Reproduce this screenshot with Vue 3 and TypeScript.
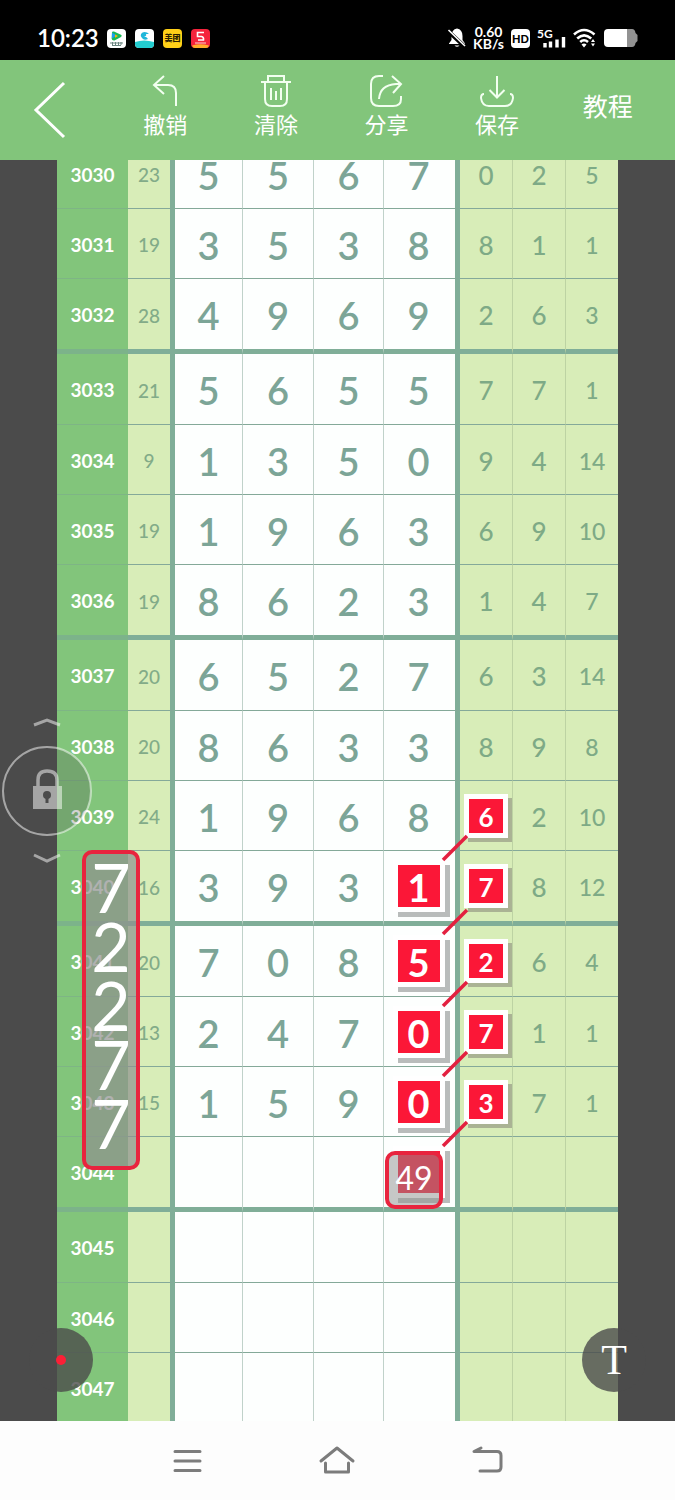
<script setup lang="ts">
interface Row {
  id: string
  sum: string
  main: string[]
  side: string[]
  thick?: boolean
  markMain?: boolean
  markSide?: boolean
}

const make = (id: number, sum: string, main: string, side: string, extra: Partial<Row> = {}): Row => ({
  id: String(id),
  sum,
  main: main ? main.split(' ') : ['', '', '', ''],
  side: side ? side.split(' ') : ['', '', ''],
  ...extra,
})

const rows: Row[] = [
  make(3030, '23', '5 5 6 7', '0 2 5'),
  make(3031, '19', '3 5 3 8', '8 1 1'),
  make(3032, '28', '4 9 6 9', '2 6 3', { thick: true }),
  make(3033, '21', '5 6 5 5', '7 7 1'),
  make(3034, '9', '1 3 5 0', '9 4 14'),
  make(3035, '19', '1 9 6 3', '6 9 10'),
  make(3036, '19', '8 6 2 3', '1 4 7', { thick: true }),
  make(3037, '20', '6 5 2 7', '6 3 14'),
  make(3038, '20', '8 6 3 3', '8 9 8'),
  make(3039, '24', '1 9 6 8', '6 2 10', { markSide: true }),
  make(3040, '16', '3 9 3 1', '7 8 12', { thick: true, markMain: true, markSide: true }),
  make(3041, '20', '7 0 8 5', '2 6 4', { markMain: true, markSide: true }),
  make(3042, '13', '2 4 7 0', '7 1 1', { markMain: true, markSide: true }),
  make(3043, '15', '1 5 9 0', '3 7 1', { markMain: true, markSide: true }),
  make(3044, '', '', '', { thick: true, markMain: true }),
  make(3045, '', '', ''),
  make(3046, '', '', ''),
  make(3047, '', '', ''),
]

const column = ['7', '2', '2', '7', '7']
</script>

<template>
  <div class="page">
    <div class="status">
      <span class="time">10:23</span>
      <div class="apps">
        <svg class="app" viewBox="0 0 19 19">
          <rect width="19" height="19" rx="4" fill="#fff" />
          <path d="M5 3.5Q5 2 7 2.6L14 5.7Q15.6 6.7 14 8L7.5 11.5Q5 12 4.6 9.5Z" fill="#19b955" />
          <path d="M5 3.6L9.5 6.4L5 9.5Z" fill="#1b9ff0" />
          <path d="M8 5.4L11 7L8 8.8Z" fill="#ffb400" />
          <path d="M3 14H16M5 16.5H14M5.5 13V17M8.5 13V17M11.5 13V17M14 13V16" stroke="#6a8580" stroke-width="1" />
        </svg>
        <svg class="app" viewBox="0 0 19 19">
          <rect width="19" height="19" rx="4" fill="#fff" />
          <path d="M0 13Q9 10 19 13V15Q19 19 15 19H4Q0 19 0 15Z" fill="#22cdd0" />
          <path d="M6 5Q8 2 12 3.5L14 5H11Q12 7 9 7.5Q12 7.5 13 10Q9 12 7 9Q5 7 6 5Z" fill="#20b7da" />
        </svg>
        <span class="app meituan">美团</span>
        <svg class="app" viewBox="0 0 19 19">
          <rect width="19" height="19" rx="4" fill="#f5233c" />
          <path d="M1 16.5Q9 14 18 16.5Q17 19 15 19H4Q2 19 1 16.5Z" fill="#ffad2b" />
          <path d="M13 3.5H6.5V7.5H10.5Q13 8 12.5 11H7" fill="none" stroke="#fff" stroke-width="1.6" />
          <path d="M4 14H15" stroke="#ffd5cf" stroke-width="1" />
        </svg>
      </div>
      <div class="signals">
        <svg width="18" height="20" viewBox="0 0 18 20">
          <path d="M9 0.5Q14.5 1.5 14.5 8V12L17 15.5V16H1V15.5L3.5 12V8Q3.5 1.5 9 0.5Z" fill="#fff" />
          <path d="M6.5 17.5H11.5Q9 20 6.5 17.5Z" fill="#fff" />
          <path d="M-1 2L17 19" stroke="#000" stroke-width="4" />
          <path d="M0.500 2L17 18" stroke="#fff" stroke-width="1.6" />
        </svg>
        <span class="speed"><span>0.60</span><span>KB/s</span></span>
        <span class="hd">HD</span>
        <svg width="29" height="22" viewBox="0 0 29 22">
          <text x="0" y="11" class="gen">5G</text>
          <path d="M8 16V20.500M13.500 14.500V20.500M20 12.500V20.500M26.500 10V20.500" stroke="#fff" stroke-width="3.400" />
        </svg>
        <svg width="24" height="20" viewBox="0 0 24 20">
          <g fill="none" stroke="#fff" stroke-width="2.600">
            <path d="M1 6.500Q11 -2.500 21.500 6.500" />
            <path d="M4.200 10.500Q11 4.200 18.200 10.500" />
            <path d="M7.200 14Q11 10.500 15 14" />
          </g>
          <path d="M8.500 16.500Q11 14.500 13.500 16.500L11 19.500Z" fill="#fff" />
          <path d="M18 14L20 11L22 14ZM18 15.500H22L20 18.500Z" fill="#fff" />
        </svg>
        <svg width="34" height="18" viewBox="0 0 34 18">
          <path d="M22 0H28Q31 0 31.500 4L33.500 6V12L31.500 14Q31 18 28 18H22Z" fill="#929292" />
          <path d="M4 0H23V18H4Q0 18 0 14V4Q0 0 4 0Z" fill="#fff" />
        </svg>
      </div>
    </div>

    <header class="toolbar">
      <button class="tool" aria-label="返回">
        <svg width="32" height="58" viewBox="0 0 32 58"><path d="M30 2L2 29L30 56" fill="none" stroke="#fff" stroke-width="3" /></svg>
      </button>
      <button class="tool">
        <svg width="34" height="34" viewBox="0 0 34 34"><path d="M16 2L6 11L16 20M6 11H20Q28 11 28 19V32" /></svg>
        <span>撤销</span>
      </button>
      <button class="tool">
        <svg width="34" height="34" viewBox="0 0 34 34"><path d="M2 8H32M9 8V2H25V8M6 8V25Q6 32 13 32H21Q28 32 28 25V8M12 14V26M17 17V26M22 14V26" /></svg>
        <span>清除</span>
      </button>
      <button class="tool">
        <svg width="34" height="34" viewBox="0 0 34 34"><path d="M14 2H10Q2 2 2 10V24Q2 32 10 32H24Q32 32 32 25V22M23 2L32 10L24 19M32 10H27Q11 11 10 25" /></svg>
        <span>分享</span>
      </button>
      <button class="tool">
        <svg width="34" height="34" viewBox="0 0 34 34"><path d="M17 2V23M9.500 16L17 23.500L24.500 16M4 20Q1 20 1 24Q2 32 9 32H25Q32 32 33 24Q33 20 30 20" /></svg>
        <span>保存</span>
      </button>
      <button class="tool guide">教程</button>
    </header>

    <main class="stage">
      <div class="sheet">
        <table>
          <colgroup>
            <col class="w-id" /><col class="w-sum" /><col class="w-a" /><col class="w-b" /><col class="w-c" /><col class="w-d" />
            <col class="w-s" /><col class="w-s" /><col class="w-e" />
          </colgroup>
          <tbody>
            <tr v-for="row in rows" :key="row.id" :class="{ thick: row.thick }">
              <th scope="row">{{ row.id }}</th>
              <td class="sum">{{ row.sum }}</td>
              <td v-for="(n, i) in row.main" :key="'m' + i" class="main" :class="{ last: i === 3 }">
                <span v-if="i === 3 && row.markMain" class="mark large">{{ n }}</span>
                <template v-else>{{ n }}</template>
                <span v-if="i === 3 && row.id === '3044'" class="note guess">49</span>
              </td>
              <td v-for="(n, i) in row.side" :key="'s' + i" class="side" :class="{ narrow: i === 2 }">
                <template v-if="i === 0 && row.markSide">
                  <span class="mark">{{ n }}</span>
                  <svg class="link" viewBox="0 0 26 26"><path d="M25 1L1 25" stroke="#e3203f" stroke-width="3.500" /></svg>
                </template>
                <template v-else>{{ n }}</template>
              </td>
            </tr>
          </tbody>
        </table>
      </div>

      <div class="note stack">
        <span v-for="(n, i) in column" :key="i">{{ n }}</span>
      </div>

      <button class="lock" aria-label="锁定">
        <svg width="94" height="152" viewBox="0 0 94 152">
          <circle cx="47" cy="76" r="44" fill="#4b4b4b" fill-opacity="0.250" />
          <g fill="none" stroke="#fff" stroke-opacity="0.500">
            <circle cx="47" cy="76" r="44" stroke-width="2" />
            <path d="M34 10L47 5L60 10M34 140L47 146L60 140" stroke-width="3" />
            <path d="M38 71V65Q38 56 47 56Q57 56 57 65V71" stroke-width="3.500" />
          </g>
          <path d="M33 71H62V94H33Z" fill="#fff" fill-opacity="0.500" />
          <circle cx="47" cy="80" r="4" fill="#4b4b4b" />
          <path d="M47 80V88" stroke="#4b4b4b" stroke-width="3" />
        </svg>
      </button>

      <button class="round pen" aria-label="画笔"><i></i></button>
      <button class="round text">T</button>
    </main>

    <nav class="system">
      <button aria-label="菜单">
        <svg width="30" height="28" viewBox="0 0 30 28"><path d="M3 4.500H28M3 14H28M3 23.500H28" /></svg>
      </button>
      <button aria-label="主页">
        <svg width="36" height="30" viewBox="0 0 36 30"><path d="M2 15L18 2L34 15M6.500 17V26H29.500V17" /></svg>
      </button>
      <button aria-label="后退">
        <svg width="32" height="30" viewBox="0 0 32 30"><path d="M9 2L2 5.500H25Q29 5.500 29 9.500V21Q29 25 25 25H8" /></svg>
      </button>
    </nav>
  </div>
</template>

<style>
body {
  margin: 0;
}
</style>

<style scoped>
* {
  box-sizing: border-box;
}
.page {
  display: flex;
  flex-direction: column;
  height: 100vh;
  overflow: hidden;
  background: #fdfdfd;
  font-family: Lato, "Noto Sans CJK SC", sans-serif;
}
button {
  border: 0;
  padding: 0;
  background: none;
  color: inherit;
  font: inherit;
}
svg {
  display: block;
  overflow: visible;
}
.status {
  display: flex;
  align-items: center;
  flex: none;
  height: 60px;
  padding: 16px 37px 0 37px;
  background: #000;
  color: #fff;
}
.time {
  width: 61px;
  font-size: 24px;
  line-height: 32px;
  font-weight: 600;
}
.apps {
  display: flex;
  gap: 9px;
  margin-left: 9px;
}
.app {
  width: 19px;
  height: 19px;
}
.meituan {
  border-radius: 4px;
  background: #ffd018;
  color: #2a2100;
  font-size: 8px;
  line-height: 19px;
  font-weight: 900;
  text-align: center;
}
.signals {
  display: flex;
  align-items: center;
  gap: 7px;
  margin-left: auto;
}
.speed {
  display: flex;
  flex-direction: column;
  font-size: 14px;
  line-height: 12px;
  font-weight: 700;
  text-align: center;
}
.hd {
  width: 19px;
  height: 19px;
  border-radius: 4px;
  background: #fff;
  color: #000;
  font-size: 11px;
  line-height: 19px;
  font-weight: 900;
  text-align: center;
}
.gen {
  fill: #fff;
  font-size: 12px;
  font-weight: 700;
}
.toolbar {
  display: grid;
  grid-template-columns: 110px repeat(5, 1fr);
  flex: none;
  height: 100px;
  padding-right: 12px;
  background: #82c57b;
  color: #fff;
}
.tool {
  display: flex;
  flex-direction: column;
  align-items: center;
  padding-top: 14px;
  font-size: 22px;
  line-height: 34px;
}
.tool:first-child {
  padding-top: 21px;
  padding-right: 10px;
}
.tool:not(:first-child) svg {
  fill: none;
  stroke: #f2fff0;
  stroke-width: 2;
}
.tool.guide {
  padding-top: 29px;
  font-size: 25px;
}
.stage {
  position: relative;
  flex: 1;
  min-height: 0;
  overflow: hidden;
  padding: 0 57px;
  background: #4b4b4b;
}
.sheet {
  margin-top: -21px;
}
table {
  width: 100%;
  table-layout: fixed;
  border-collapse: separate;
  border-spacing: 0;
}
.w-id { width: 71px; }
.w-sum { width: 47px; }
.w-a { width: 68px; }
.w-b { width: 71px; }
.w-c { width: 70px; }
.w-d { width: 76px; }
.w-s { width: 53px; }
.w-e { width: 52px; }
th,
td {
  position: relative;
  height: 70px;
  padding: 2px 0 0;
  border-bottom: 1px solid #84a999;
  text-align: center;
}
tr.thick > * {
  height: 75px;
  border-bottom: 5px solid #80ae98;
}
tr.thick + tr > * {
  height: 71px;
}
th {
  background: #82c57b;
  border-bottom-color: #7eb585;
  color: #fff;
  font-size: 19px;
  line-height: 24px;
  font-weight: 700;
}
tr.thick > th {
  border-bottom-color: #7cb38a;
}
.sum {
  background: #d8edb8;
  border-right: 5px solid #80ae98;
  color: #82ab88;
  font-size: 19px;
  font-weight: 500;
}
.main {
  background: #fdfffe;
  border-right: 1px solid #c0d2ca;
  color: #7ca597;
  font-size: 38px;
  line-height: 42px;
  font-weight: 600;
}
.main.last {
  padding-right: 2px;
  border-right: 5px solid #80ae98;
}
.side {
  background: #d8edb8;
  border-right: 1px solid #bdd3a3;
  color: #7eaa86;
  font-size: 26px;
  line-height: 30px;
  font-weight: 500;
}
.side.narrow {
  border-right: 0;
  font-size: 23px;
}
.mark {
  display: block;
  width: 44px;
  height: 44px;
  margin: -2px auto 0;
  border: 5px solid #fff;
  background: #fb1737;
  box-shadow: 4px 4px 0 #aab394;
  color: #fff;
  font-size: 26px;
  line-height: 36px;
  font-weight: 700;
}
.mark.large {
  width: 52px;
  height: 52px;
  box-shadow: 5px 5px 0 #b9bcbb;
  font-size: 38px;
  line-height: 44px;
}
.link {
  position: absolute;
  z-index: 2;
  left: -18px;
  bottom: -11px;
  width: 26px;
  height: 26px;
}
tr.thick .link {
  bottom: -14px;
}
.note {
  position: absolute;
  z-index: 3;
  border: 4px solid #e8243e;
  border-radius: 10px;
  background: rgba(142, 144, 142, 0.7);
  color: #fff;
  text-align: center;
}
.guess {
  top: 14px;
  left: 1px;
  width: 58px;
  height: 58px;
  background: rgba(142, 144, 142, 0.5);
  font-size: 32px;
  line-height: 46px;
  font-weight: 400;
}
.stack {
  top: 690px;
  left: 82px;
  display: flex;
  flex-direction: column;
  width: 58px;
  padding: 3px 0 14px;
  font-size: 68px;
  line-height: 59px;
}
.stack span {
  display: flex;
  justify-content: center;
}
.lock {
  position: absolute;
  z-index: 4;
  top: 555px;
  left: 0;
}
.round {
  position: absolute;
  z-index: 4;
  top: 1168px;
  display: flex;
  align-items: center;
  justify-content: center;
  width: 64px;
  height: 64px;
  border-radius: 50%;
}
.pen {
  left: 29px;
  background: rgba(75, 75, 75, 0.8);
}
.pen i {
  width: 10px;
  height: 10px;
  border-radius: 50%;
  background: #fb1f36;
}
.text {
  right: 29px;
  background: rgba(75, 75, 75, 0.8);
  color: #fff;
  font-family: "Liberation Serif", serif;
  font-size: 42px;
  line-height: 48px;
}
.system {
  display: grid;
  grid-template-columns: repeat(3, 1fr);
  flex: none;
  height: 79px;
  padding: 0 112px;
  background: #fdfdfd;
}
.system button {
  display: flex;
  align-items: center;
  justify-content: center;
}
.system svg {
  fill: none;
  stroke: #7c7c7c;
  stroke-width: 3;
  stroke-linecap: round;
  stroke-linejoin: round;
}
</style>
